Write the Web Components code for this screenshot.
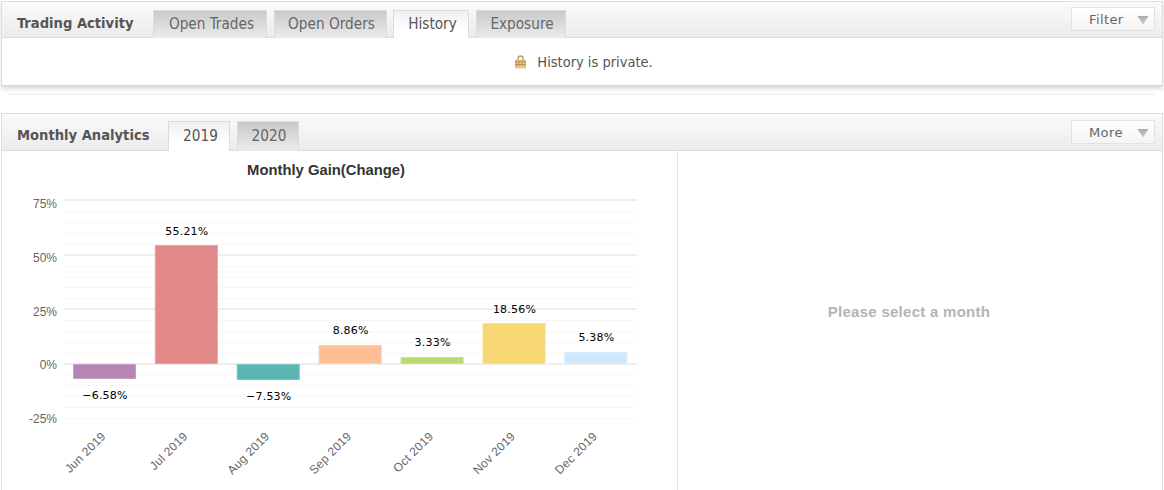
<!DOCTYPE html>
<html>
<head>
<meta charset="utf-8">
<title>Trading Activity</title>
<style>
  html, body { margin: 0; height: 490px; overflow: hidden; background: #fff; }
  body { font-family: "DejaVu Sans Condensed", "Liberation Sans", sans-serif; padding: 1px 1px 0; box-sizing: border-box; }
  .rule { height: 1px; background: #efefef; margin: 8px 7px 18px 7px; }
</style>
</head>
<body>
<fx-panel heading="Trading Activity" menu="Filter" shadowed style="--title-w:136px">
  <fx-tab slot="tabs" style="width:114px">Open Trades</fx-tab>
  <fx-tab slot="tabs" style="width:113px">Open Orders</fx-tab>
  <fx-tab slot="tabs" style="width:76px" active>History</fx-tab>
  <fx-tab slot="tabs" style="width:90px">Exposure</fx-tab>
  <fx-private-note>History is private.</fx-private-note>
</fx-panel>
<div class="rule"></div>
<fx-panel heading="Monthly Analytics" menu="More" tall style="--title-w:151px">
  <fx-tab slot="tabs" style="width:62px" active>2019</fx-tab>
  <fx-tab slot="tabs" style="width:62px">2020</fx-tab>
  <fx-split>
    <fx-gain-chart slot="left"></fx-gain-chart>
    <span slot="right">Please select a month</span>
  </fx-split>
</fx-panel>

<script>
class FxPanel extends HTMLElement {
  constructor() {
    super();
    this.attachShadow({ mode: 'open' });
    this.shadowRoot.innerHTML = `
      <style>
        :host { display: block; border: 1px solid #dedede; border-bottom-color: #d8d8d8; background: #fff; }
        :host([shadowed]) { box-shadow: 0 3px 4px rgba(0,0,0,.14); }
        .head { display: flex; height: 35px; padding-left: 15px; border-bottom: 1px solid #dcdcdc;
                background: linear-gradient(#fafafa, #ececec); }
        :host([tall]) .head { height: 36px; }
        h2 { margin: 0; width: var(--title-w); align-self: center; font: bold 14.6px "DejaVu Sans Condensed", sans-serif; color: #555; position: relative; top: 3px; }
        :host([tall]) h2 { top: 2px; }
        .tabs { display: flex; gap: 6.5px; margin: 8px 0 -1px; }
        :host([tall]) .tabs { margin-top: 7px; }
        fx-menu { margin: 5px 7px 0 auto; }
        :host([tall]) fx-menu { margin-top: 6px; }
      </style>
      <div class="head">
        <h2></h2>
        <div class="tabs"><slot name="tabs"></slot></div>
        <fx-menu></fx-menu>
      </div>
      <slot></slot>`;
    this.shadowRoot.querySelector('h2').textContent = this.getAttribute('heading');
    this.shadowRoot.querySelector('fx-menu').textContent = this.getAttribute('menu');
  }
}

class FxTab extends HTMLElement {
  constructor() {
    super();
    this.attachShadow({ mode: 'open' });
    this.shadowRoot.innerHTML = `
      <style>
        :host { display: flex; align-items: center; justify-content: center; box-sizing: border-box; padding: 0 0 1px 3px;
                border: 1px solid #dcdcdc; border-bottom: 0;
                background: linear-gradient(#c9c9c9, #ececec); color: #666; font: 15.2px "DejaVu Sans Condensed", sans-serif; }
        :host([active]) { background: linear-gradient(#f0f0f0, #fff 70%); color: #555; }
      </style>
      <slot></slot>`;
  }
}

class FxMenu extends HTMLElement {
  constructor() {
    super();
    this.attachShadow({ mode: 'open' });
    this.shadowRoot.innerHTML = `
      <style>
        :host { display: flex; align-items: center; box-sizing: border-box; width: 84px; height: 24px; padding: 1px 0 0 17px;
                border: 1px solid #e2e2e2; background: linear-gradient(#fff, #f4f4f4);
                color: #666; font: 13px "DejaVu Sans", sans-serif; letter-spacing: .4px; }
        svg { margin-left: auto; margin-right: 5px; }
      </style>
      <slot></slot>
      <svg width="12" height="10" viewBox="0 0 12 10">
        <defs><linearGradient id="g" x1="0" y1="0" x2="0" y2="1"><stop offset="0" stop-color="#aaa"/><stop offset="1" stop-color="#ccc"/></linearGradient></defs>
        <path d="M.5 1h11L6 9.5z" fill="url(#g)"/>
      </svg>`;
  }
}

class FxPrivateNote extends HTMLElement {
  constructor() {
    super();
    this.attachShadow({ mode: 'open' });
    this.shadowRoot.innerHTML = `
      <style>
        :host { display: flex; justify-content: center; align-items: center; gap: 10px; height: 47px; padding-left: 3px;
                color: #555; font: 14.5px "DejaVu Sans Condensed", sans-serif; }
        svg { display: block; }
      </style>
      <svg width="13" height="14" viewBox="0 0 13 14">
        <path d="M4 5V3.5a2.5 2.5 0 0 1 5 0V5" fill="none" stroke="#a89a7a" stroke-width="1.3"/>
        <rect x="1" y="5" width="11" height="7.5" fill="#dcb46c"/>
        <path d="M1 7h11M1 9.5h11" stroke="#c2924a"/>
        <path d="M3 8h1M6 8h1M9 8h1M3 11h1M6 11h1M9 11h1" stroke="#f0dca8"/>
        <rect x="1" y="12.5" width="11" height="1" fill="#c9c9c9"/>
      </svg>
      <span><slot></slot></span>`;
  }
}

class FxSplit extends HTMLElement {
  constructor() {
    super();
    this.attachShadow({ mode: 'open' });
    this.shadowRoot.innerHTML = `
      <style>
        :host { display: grid; grid-template-columns: 675px 1fr; height: 350px; }
        .right { display: flex; align-items: center; justify-content: center; border-left: 1px solid #e4e4e4;
                 padding: 0 22px 29px 0; box-sizing: border-box; color: #b4b4b4; font: bold 15px "Liberation Sans", sans-serif; letter-spacing: .27px; }
      </style>
      <div><slot name="left"></slot></div>
      <div class="right"><slot name="right"></slot></div>`;
  }
}

// month, label, bar height in px (negative goes down), label baseline, colour
const MONTHS = [
  ['Jun 2019', '\u22126.58%', -15, 399, '#b585b3'],
  ['Jul 2019', '55.21%', 119, 235, '#e38888'],
  ['Aug 2019', '\u22127.53%', -16, 400, '#5bb5b3'],
  ['Sep 2019', '8.86%', 19, 334, '#ffbf94'],
  ['Oct 2019', '3.33%', 7, 346, '#bdd96e'],
  ['Nov 2019', '18.56%', 41, 313, '#f7d774'],
  ['Dec 2019', '5.38%', 12, 341, '#cfe8fa'],
];
const AXIS = [['75%', 208], ['50%', 262], ['25%', 316], ['0%', 369], ['-25%', 423]];

class FxGainChart extends HTMLElement {
  constructor() {
    super();
    this.attachShadow({ mode: 'open' });
    const zero = 364, step = 10.87;
    let grid = '', axis = '', bars = '';
    for (let i = -5; i <= 15; i++) {
      const y = Math.round(363.5 - i * step);
      const major = i % 5 === 0 && i >= 0;
      grid += `<rect x="64" y="${y - (major ? 1 : 0)}" width="573" height="${major ? 2 : 1}" fill="${major ? '#eeeeee' : '#f7f7f7'}"/>`;
    }
    AXIS.forEach(([t, y]) => { axis += `<text class="axis" x="57" y="${y}" text-anchor="end">${t}</text>`; });
    MONTHS.forEach(([name, label, size, labelY, color], i) => {
      const cx = 104.5 + i * 81.9;
      const h = Math.abs(size);
      const top = size > 0 ? zero - h : zero;
      bars += `<rect x="${cx - 31.5}" y="${top}" width="63" height="${h}" fill="${color}"/>`;
      bars += `<rect x="${cx - 31}" y="${top + .5}" width="62" height="${h - 1}" fill="none" stroke="#fff" stroke-opacity=".45" stroke-dasharray="1 1"/>`;
      bars += `<text class="val" x="${cx + .5}" y="${labelY}" text-anchor="middle">${label}</text>`;
      bars += `<text class="month" text-anchor="end" transform="translate(${cx + 2} 437) rotate(-45)">${name}</text>`;
    });
    this.shadowRoot.innerHTML = `
      <style>
        :host { display: block; }
        svg { display: block; }
        text { font-family: "Liberation Sans", sans-serif; }
        .title { font-weight: bold; font-size: 14.8px; fill: #333; }
        .axis, .month { font-size: 12px; fill: #666; }
        .month { letter-spacing: .3px; }
        .val { font: 11px "DejaVu Sans", sans-serif; fill: #000; letter-spacing: .2px; }
      </style>
      <svg width="675" height="339" viewBox="2 151 675 339">
        <text class="title" x="326" y="175" text-anchor="middle">Monthly Gain(Change)</text>
        ${grid}${axis}${bars}
      </svg>`;
  }
}

customElements.define('fx-menu', FxMenu);
customElements.define('fx-tab', FxTab);
customElements.define('fx-panel', FxPanel);
customElements.define('fx-private-note', FxPrivateNote);
customElements.define('fx-split', FxSplit);
customElements.define('fx-gain-chart', FxGainChart);
</script>
</body>
</html>
